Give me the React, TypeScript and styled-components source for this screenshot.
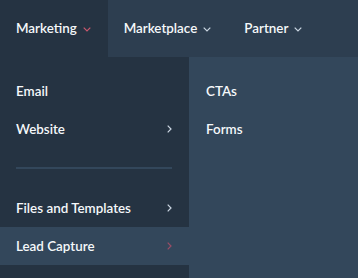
import React from 'react';
import styled, { createGlobalStyle } from 'styled-components';

const GlobalStyle = createGlobalStyle`
  html, body {
    margin: 0;
    padding: 0;
    background: #33475b;
  }
  body {
    font-family: Lato, "Open Sans", sans-serif;
    -webkit-font-smoothing: antialiased;
  }
`;

const topItems = [
  { label: 'Marketing', active: true },
  { label: 'Marketplace', active: false },
  { label: 'Partner', active: false },
];

const menuTop = [
  { label: 'Email', arrow: false },
  { label: 'Website', arrow: true },
];

const menuBottom = [
  { label: 'Files and Templates', arrow: true, active: false },
  { label: 'Lead Capture', arrow: true, active: true },
];

const subItems = ['CTAs', 'Forms'];

const Chevron = ({ dir, color }: { dir: 'down' | 'right'; color: string }) =>
  dir === 'down' ? (
    <svg width="8" height="5" viewBox="0 0 8 5">
      <path d="M0.7 0.7 L4 4 L7.3 0.7" fill="none" stroke={color} strokeWidth="1.2" />
    </svg>
  ) : (
    <svg width="5" height="8" viewBox="0 0 5 8">
      <path d="M0.7 0.7 L4 4 L0.7 7.3" fill="none" stroke={color} strokeWidth="1.2" />
    </svg>
  );

export default function App() {
  return (
    <Page>
      <GlobalStyle />
      <TopBar>
        {topItems.map(item => (
          <TopItem key={item.label} active={item.active}>
            {item.label}
            <Chevron dir="down" color={item.active ? '#c9586e' : '#cbd6e2'} />
          </TopItem>
        ))}
      </TopBar>
      <Dropdown>
        <Column>
          {menuTop.map(item => (
            <MenuRow key={item.label}>
              {item.label}
              {item.arrow && <Chevron dir="right" color="#cbd6e2" />}
            </MenuRow>
          ))}
          <Divider />
          {menuBottom.map(item => (
            <MenuRow key={item.label} active={item.active}>
              {item.label}
              {item.arrow && (
                <Chevron dir="right" color={item.active ? '#9b4d66' : '#cbd6e2'} />
              )}
            </MenuRow>
          ))}
          <ColumnFoot />
        </Column>
        <SubPanel>
          {subItems.map(label => (
            <SubRow key={label}>{label}</SubRow>
          ))}
        </SubPanel>
      </Dropdown>
    </Page>
  );
}

const Page = styled.div`
  width: 358px;
  height: 278px;
  display: flex;
  flex-direction: column;
  overflow: hidden;
`;

const TopBar = styled.div`
  height: 57px;
  display: flex;
  background: #2d3e50;
`;

const TopItem = styled.div<{ active?: boolean }>`
  display: flex;
  align-items: center;
  gap: 6px;
  padding: 0 17px 1px 16px;
  height: 100%;
  box-sizing: border-box;
  color: #f5f8fa;
  font-size: 13.4px;
  font-weight: 600;
  background: ${p => (p.active ? '#253342' : 'transparent')};
  svg {
    margin-top: 2px;
  }
`;

const Dropdown = styled.div`
  flex: 1;
  display: flex;
`;

const Column = styled.div`
  width: 189px;
  display: flex;
  flex-direction: column;
  padding-top: 15px;
  background: #253342;
`;

const MenuRow = styled.div<{ active?: boolean }>`
  height: 38px;
  display: flex;
  align-items: center;
  justify-content: space-between;
  padding: 0 17px 0 16px;
  color: #f5f8fa;
  font-size: 13.4px;
  font-weight: 600;
  background: ${p => (p.active ? '#33475b' : 'transparent')};
`;

const Divider = styled.div`
  height: 2px;
  margin: 19px 16px 20px 16px;
  background: #33475b;
  width: 156px;
`;

const ColumnFoot = styled.div`
  flex: 1;
`;

const SubPanel = styled.div`
  flex: 1;
  display: flex;
  flex-direction: column;
  padding-top: 15px;
  background: #33475b;
`;

const SubRow = styled.div`
  height: 38px;
  display: flex;
  align-items: center;
  padding-left: 17px;
  color: #f5f8fa;
  font-size: 13.4px;
  font-weight: 600;
`;
